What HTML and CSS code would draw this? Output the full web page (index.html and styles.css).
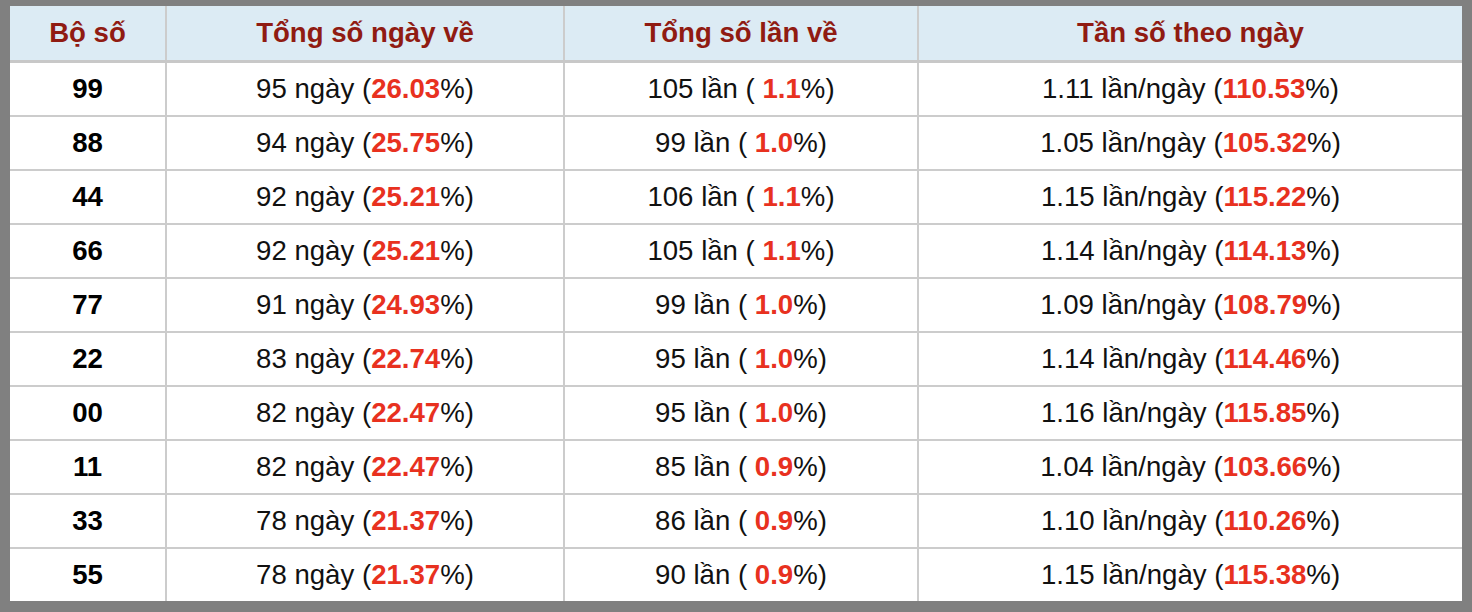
FILE: index.html
```html
<!DOCTYPE html>
<html lang="vi">
<head>
<meta charset="utf-8">
<title>Thống kê</title>
<link rel="stylesheet" href="styles.css">
</head>
<body>
<table class="stats">
  <colgroup>
    <col class="c1"><col class="c2"><col class="c3"><col class="c4">
  </colgroup>
  <thead>
    <tr><th>Bộ số</th><th>Tổng số ngày về</th><th>Tổng số lần về</th><th>Tần số theo ngày</th></tr>
  </thead>
  <tbody>
    <tr><td class="num">99</td><td>95 ngày (<b>26.03</b>%)</td><td>105 lần ( <b>1.1</b>%)</td><td>1.11 lần/ngày (<b>110.53</b>%)</td></tr>
    <tr><td class="num">88</td><td>94 ngày (<b>25.75</b>%)</td><td>99 lần ( <b>1.0</b>%)</td><td>1.05 lần/ngày (<b>105.32</b>%)</td></tr>
    <tr><td class="num">44</td><td>92 ngày (<b>25.21</b>%)</td><td>106 lần ( <b>1.1</b>%)</td><td>1.15 lần/ngày (<b>115.22</b>%)</td></tr>
    <tr><td class="num">66</td><td>92 ngày (<b>25.21</b>%)</td><td>105 lần ( <b>1.1</b>%)</td><td>1.14 lần/ngày (<b>114.13</b>%)</td></tr>
    <tr><td class="num">77</td><td>91 ngày (<b>24.93</b>%)</td><td>99 lần ( <b>1.0</b>%)</td><td>1.09 lần/ngày (<b>108.79</b>%)</td></tr>
    <tr><td class="num">22</td><td>83 ngày (<b>22.74</b>%)</td><td>95 lần ( <b>1.0</b>%)</td><td>1.14 lần/ngày (<b>114.46</b>%)</td></tr>
    <tr><td class="num">00</td><td>82 ngày (<b>22.47</b>%)</td><td>95 lần ( <b>1.0</b>%)</td><td>1.16 lần/ngày (<b>115.85</b>%)</td></tr>
    <tr><td class="num">11</td><td>82 ngày (<b>22.47</b>%)</td><td>85 lần ( <b>0.9</b>%)</td><td>1.04 lần/ngày (<b>103.66</b>%)</td></tr>
    <tr><td class="num">33</td><td>78 ngày (<b>21.37</b>%)</td><td>86 lần ( <b>0.9</b>%)</td><td>1.10 lần/ngày (<b>110.26</b>%)</td></tr>
    <tr><td class="num">55</td><td>78 ngày (<b>21.37</b>%)</td><td>90 lần ( <b>0.9</b>%)</td><td>1.15 lần/ngày (<b>115.38</b>%)</td></tr>
  </tbody>
</table>
</body>
</html>
```
FILE: styles.css
```css
html, body {
  margin: 0;
  padding: 0;
}
body {
  background: #808080;
  padding: 6px 10px 12px;
  font-family: "Liberation Sans", Arial, sans-serif;
}
.stats {
  width: 1452px;
  border-collapse: collapse;
  border-style: hidden;
  background: #ffffff;
  table-layout: fixed;
  font-size: 27.6px;
  color: #111111;
}
.c1 { width: 156px; }
.c2 { width: 398px; }
.c3 { width: 354px; }
.c4 { width: 544px; }
.stats th,
.stats td {
  border: 2px solid #cccccc;
  padding: 0;
  text-align: center;
  vertical-align: middle;
}
.stats th {
  height: 54px;
  background: #dcebf4;
  color: #901b12;
  font-weight: bold;
}
.stats thead th {
  border-bottom-width: 3px;
  border-bottom-color: #c8c8c8;
}
.stats td {
  height: 52px;
}
.stats td.num {
  font-weight: bold;
  color: #000000;
}
.stats td b {
  color: #e8311f;
  font-weight: bold;
}
```
